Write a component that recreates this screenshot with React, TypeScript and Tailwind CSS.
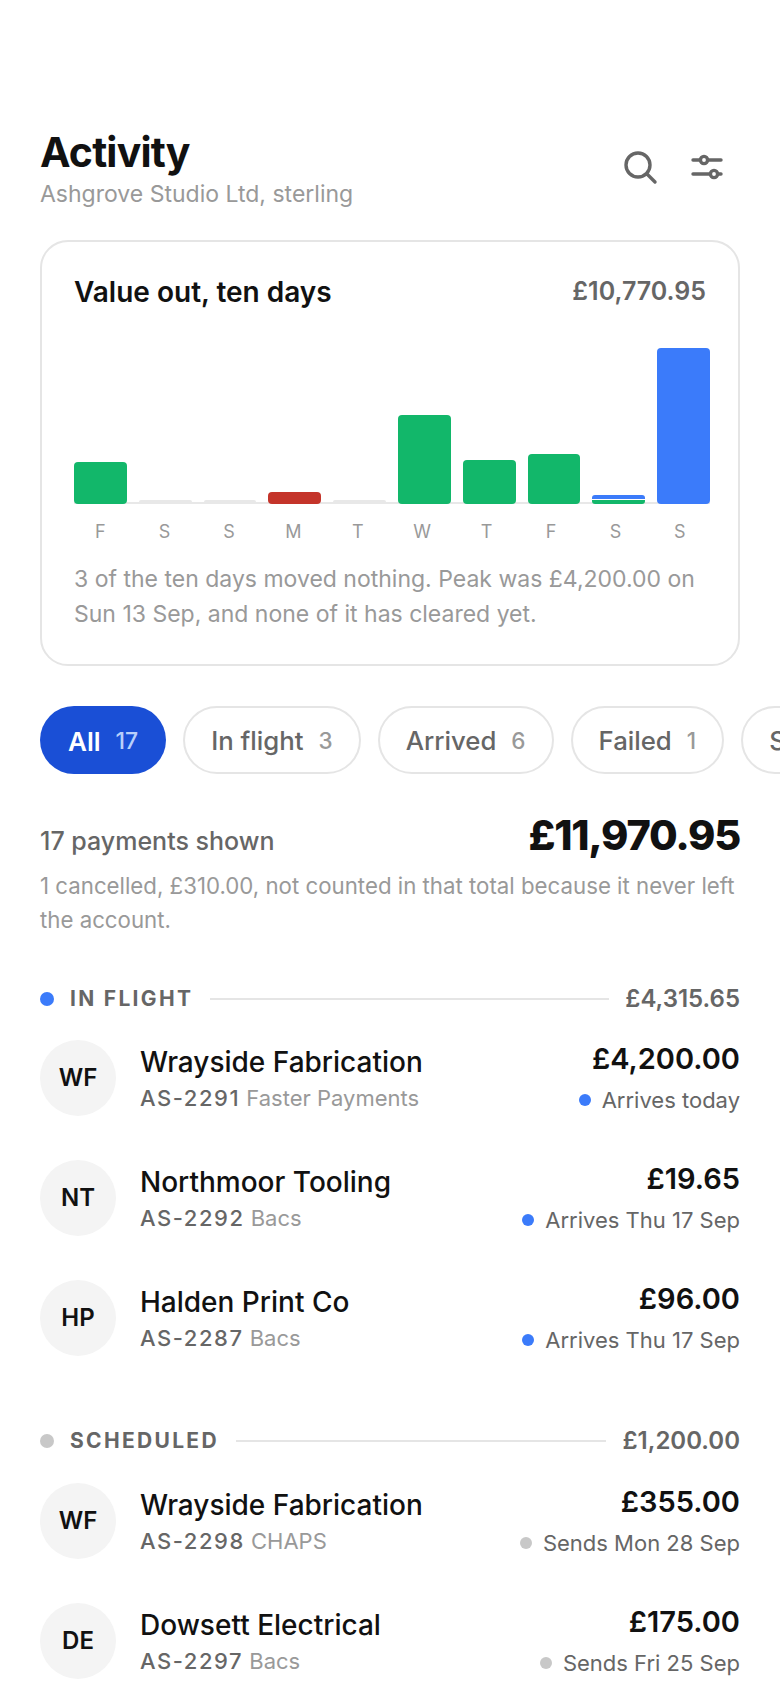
const bars = [
  { day: "F", h: 42, color: "bg-[#12b76a]" },
  { day: "S", h: 4, color: "bg-[#e8e8e8]" },
  { day: "S", h: 4, color: "bg-[#e8e8e8]" },
  { day: "M", h: 12, color: "bg-[#c4342a]" },
  { day: "T", h: 4, color: "bg-[#e8e8e8]" },
  { day: "W", h: 89, color: "bg-[#12b76a]" },
  { day: "T", h: 44, color: "bg-[#12b76a]" },
  { day: "F", h: 50, color: "bg-[#12b76a]" },
  { day: "S", h: 0, color: "" },
  { day: "S", h: 156, color: "bg-[#3b7bfa]" },
];

const pills = [
  { label: "In flight", count: 3 },
  { label: "Arrived", count: 6 },
  { label: "Failed", count: 1 },
  { label: "Scheduled", count: 5 },
];

type Payment = {
  initials: string;
  name: string;
  ref: string;
  rail: string;
  amount: string;
  status: string;
};

const inFlight: Payment[] = [
  { initials: "WF", name: "Wrayside Fabrication", ref: "AS-2291", rail: "Faster Payments", amount: "£4,200.00", status: "Arrives today" },
  { initials: "NT", name: "Northmoor Tooling", ref: "AS-2292", rail: "Bacs", amount: "£19.65", status: "Arrives Thu 17 Sep" },
  { initials: "HP", name: "Halden Print Co", ref: "AS-2287", rail: "Bacs", amount: "£96.00", status: "Arrives Thu 17 Sep" },
];

const scheduled: Payment[] = [
  { initials: "WF", name: "Wrayside Fabrication", ref: "AS-2298", rail: "CHAPS", amount: "£355.00", status: "Sends Mon 28 Sep" },
  { initials: "DE", name: "Dowsett Electrical", ref: "AS-2297", rail: "Bacs", amount: "£175.00", status: "Sends Fri 25 Sep" },
];

function SearchIcon() {
  return (
    <svg width="36" height="36" viewBox="0 0 36 36" fill="none" stroke="#666666" strokeWidth="3.4" strokeLinecap="round">
      <circle cx="16" cy="16" r="12" />
      <line x1="25" y1="25" x2="33" y2="33" />
    </svg>
  );
}

function SlidersIcon() {
  return (
    <svg width="36" height="36" viewBox="0 0 36 36" fill="none" stroke="#666666" strokeWidth="3.4" strokeLinecap="round">
      <line x1="3" y1="11" x2="31" y2="11" />
      <line x1="3" y1="25" x2="31" y2="25" />
      <circle cx="14" cy="11" r="3.6" fill="#ffffff" />
      <circle cx="24" cy="25" r="3.6" fill="#ffffff" />
    </svg>
  );
}

function SectionHeader({ label, total, dot }: { label: string; total: string; dot: string }) {
  return (
    <div className="flex items-center h-[28px]">
      <span className={`w-[14px] h-[14px] rounded-full ${dot}`} />
      <span className="ml-[16px] text-[21px] font-bold tracking-[0.11em] text-[#666666]">{label}</span>
      <span className="flex-1 h-[2px] bg-[#e5e5e5] ml-[17px] mr-[16px]" />
      <span className="text-[24px] font-semibold text-[#666666]">{total}</span>
    </div>
  );
}

function Row({ p, dot }: { p: Payment; dot: string }) {
  return (
    <div className="flex items-center h-[76px]">
      <div className="w-[76px] h-[76px] rounded-full bg-[#f4f4f4] flex items-center justify-center text-[24px] font-semibold text-[#111111] shrink-0">
        {p.initials}
      </div>
      <div className="ml-[24px] flex-1 min-w-0 pt-[2px]">
        <div className="text-[28px] leading-[36px] font-medium text-[#111111]">{p.name}</div>
        <div className="text-[22px] leading-[32px] mt-[2px]">
          <span className="text-[#666666] font-medium tracking-[0.07em]">{p.ref}</span>{" "}
          <span className="text-[#999999]">{p.rail}</span>
        </div>
      </div>
      <div className="flex flex-col items-end">
        <div className="text-[29px] leading-[36px] font-semibold text-[#111111]">{p.amount}</div>
        <div className="flex items-center mt-[7px] text-[22px] leading-[32px] text-[#666666]">
          <span className={`w-[12px] h-[12px] rounded-full mr-[11px] ${dot}`} />
          {p.status}
        </div>
      </div>
    </div>
  );
}

export default function App() {
  return (
    <div className="w-[780px] h-[1688px] overflow-hidden bg-white pt-[124px] px-[40px] font-['Inter',sans-serif]">
      <div className="flex items-start justify-between">
        <div>
          <h1 className="text-[41px] leading-[56px] font-bold tracking-[-0.02em] text-[#111111]">Activity</h1>
          <p className="text-[23px] leading-[30px] -mt-[1px] text-[#999999]">Ashgrove Studio Ltd, sterling</p>
        </div>
        <div className="flex items-center gap-[32px] mt-[25px] mr-[14px]">
          <SearchIcon />
          <SlidersIcon />
        </div>
      </div>

      <div className="mt-[31px] h-[426px] rounded-[28px] border-2 border-[#e5e5e5] px-[32px] pt-[30px]">
        <div className="flex items-center justify-between h-[40px]">
          <h2 className="text-[28px] font-semibold text-[#111111]">Value out, ten days</h2>
          <span className="text-[25px] font-semibold text-[#666666]">£10,770.95</span>
        </div>
        <div className="mt-[32px] w-[636px] h-[158px] flex items-end gap-[12px] border-b-2 border-[#e8e8e8] box-content">
          {bars.map((b, i) =>
            b.h === 0 ? (
              <div key={i} className="flex-1 flex flex-col gap-[1px] -mb-[2px]">
                <div className="h-[4px] rounded-t-[3px] bg-[#3b7bfa]" />
                <div className="h-[4px] rounded-b-[3px] bg-[#12b76a]" />
              </div>
            ) : (
              <div
                key={i}
                className={`flex-1 rounded-[4px] -mb-[2px] ${b.color}`}
                style={{ height: b.h }}
              />
            )
          )}
        </div>
        <div className="mt-[16px] flex gap-[12px]">
          {bars.map((b, i) => (
            <div key={i} className="flex-1 text-center text-[18px] leading-[24px] text-[#999999]">
              {b.day}
            </div>
          ))}
        </div>
        <p className="mt-[18px] text-[23px] leading-[35px] text-[#999999]">
          3 of the ten days moved nothing. Peak was £4,200.00 on Sun 13 Sep, and none of it has cleared yet.
        </p>
      </div>

      <div className="mt-[40px] flex gap-[17px] w-[900px]">
        <div className="h-[68px] rounded-full bg-[#1a4fd6] px-[28px] pt-[2px] flex items-center gap-[15px] shrink-0">
          <span className="text-[26px] font-semibold text-white">All</span>
          <span className="text-[23px] font-medium text-[#b9cffb]">17</span>
        </div>
        {pills.map((p) => (
          <div
            key={p.label}
            className="h-[68px] rounded-full border-2 border-[#e5e5e5] px-[26px] pt-[2px] flex items-center gap-[15px] shrink-0"
          >
            <span className="text-[25.75px] font-medium text-[#666666]">{p.label}</span>
            <span className="text-[22.5px] font-medium text-[#999999]">{p.count}</span>
          </div>
        ))}
      </div>

      <div className="mt-[33px] flex items-center justify-between h-[56px]">
        <span className="text-[25px] font-medium text-[#666666] mt-[13px]">17 payments shown</span>
        <span className="text-[41.5px] font-extrabold tracking-[-0.03em] text-[#111111]">£11,970.95</span>
      </div>
      <p className="mt-[6px] text-[22.25px] leading-[34px] text-[#999999]">
        1 cancelled, £310.00, not counted in that total because it never left the account.
      </p>

      <div className="mt-[48px]">
        <SectionHeader label="IN FLIGHT" total="£4,315.65" dot="bg-[#3b7bfa]" />
        <div className="mt-[27px] flex flex-col gap-[44px]">
          {inFlight.map((p) => (
            <Row key={p.ref} p={p} dot="bg-[#3b7bfa]" />
          ))}
        </div>
      </div>

      <div className="mt-[71px]">
        <SectionHeader label="SCHEDULED" total="£1,200.00" dot="bg-[#c8c8c8]" />
        <div className="mt-[28px] flex flex-col gap-[44px]">
          {scheduled.map((p) => (
            <Row key={p.ref} p={p} dot="bg-[#c8c8c8]" />
          ))}
        </div>
      </div>
    </div>
  );
}
